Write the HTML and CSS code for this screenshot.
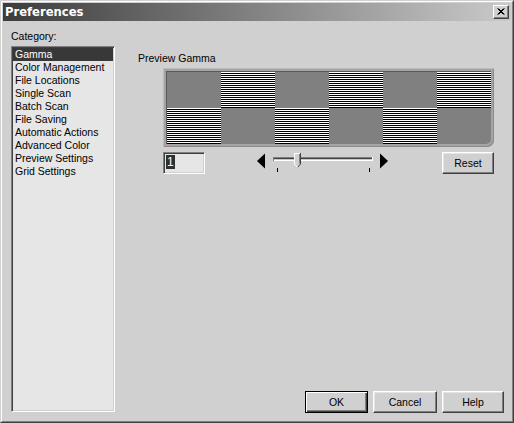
FILE: index.html
```html
<!DOCTYPE html>
<html>
<head>
<meta charset="utf-8">
<link rel="stylesheet" href="styles.css">
</head>
<body>
<div class="window">
  <div class="frame">
    <div class="titlebar">
      <span class="title">Preferences</span>
      <div class="close">
        <svg width="14" height="12" viewBox="0 0 14 12">
          <path d="M3.5,2.5 L9.5,8.5 M4.5,2.5 L10.5,8.5 M9.5,2.5 L3.5,8.5 M10.5,2.5 L4.5,8.5" stroke="#000" stroke-width="1" fill="none"/>
        </svg>
      </div>
    </div>
    <div class="content">
      <div class="left">
        <div class="label">Category:</div>
        <ul class="list">
          <li class="sel">Gamma</li>
          <li>Color Management</li>
          <li>File Locations</li>
          <li>Single Scan</li>
          <li>Batch Scan</li>
          <li>File Saving</li>
          <li>Automatic Actions</li>
          <li>Advanced Color</li>
          <li>Preview Settings</li>
          <li>Grid Settings</li>
        </ul>
      </div>
      <div class="right">
        <div class="label">Preview Gamma</div>
        <div class="preview">
          <div class="grid">
            <div class="cell gray"></div><div class="cell stripes"></div><div class="cell gray"></div><div class="cell stripes"></div><div class="cell gray"></div><div class="cell stripes"></div>
            <div class="cell stripes"></div><div class="cell gray"></div><div class="cell stripes"></div><div class="cell gray"></div><div class="cell stripes"></div><div class="cell gray corner"></div>
          </div>
        </div>
        <div class="controls">
          <div class="field"><span class="seltext">1</span></div>
          <svg class="slider" width="131" height="22" viewBox="0 0 131 22">
            <polygon points="0,9 8,1.5 8,16.5" fill="#000"/>
            <rect x="16" y="5" width="100" height="1" fill="#808080"/>
            <rect x="16" y="6" width="100" height="1" fill="#404040"/>
            <rect x="16" y="7" width="100" height="1" fill="#c8c8c8"/>
            <rect x="16" y="8" width="100" height="1" fill="#ffffff"/>
            <rect x="16" y="5" width="1" height="4" fill="#808080"/>
            <rect x="115" y="5" width="1" height="4" fill="#ffffff"/>
            <path d="M37,1 H44 V12 L40.5,15.5 L37,12 Z" fill="#d0d0d0"/>
            <polyline points="37.5,12 37.5,1.5 43,1.5" stroke="#ffffff" stroke-width="1" fill="none"/>
            <polyline points="43.5,1 43.5,12 40.5,15.5" stroke="#404040" stroke-width="1" fill="none"/>
            <polyline points="42.5,2 42.5,11.5" stroke="#808080" stroke-width="1" fill="none"/>
            <polyline points="37.5,12 40.5,15.5" stroke="#ffffff" stroke-width="1" fill="none"/>
            <rect x="20" y="16" width="1" height="4" fill="#000"/>
            <rect x="112" y="16" width="1" height="4" fill="#000"/>
            <polygon points="123,1.5 131,9 123,16.5" fill="#000"/>
          </svg>
          <div class="btn reset">Reset</div>
        </div>
        <div class="actions">
          <div class="btn default ok">OK</div>
          <div class="btn cancel">Cancel</div>
          <div class="btn help">Help</div>
        </div>
      </div>
    </div>
  </div>
</div>
</body>
</html>
```

FILE: styles.css
```css
html, body {
  margin: 0;
  padding: 0;
  background: #d0d0d0;
}

.window {
  width: 514px;
  height: 423px;
  box-sizing: border-box;
  border: 1px solid;
  border-color: #d0d0d0 #404040 #404040 #d0d0d0;
  font-family: "Liberation Sans", Arial, sans-serif;
  font-size: 10.5px;
  color: #000;
}

.frame {
  height: 100%;
  box-sizing: border-box;
  border: 1px solid;
  border-color: #ffffff #808080 #808080 #ffffff;
  padding: 1px;
  background: #d0d0d0;
  display: flex;
  flex-direction: column;
}

.titlebar {
  height: 18px;
  flex: 0 0 18px;
  display: flex;
  align-items: center;
  padding-left: 2px;
  background: linear-gradient(to right, #3c3c3c, #cacaca);
}

.title {
  font-family: "DejaVu Sans", Verdana, sans-serif;
  font-weight: bold;
  font-size: 11.6px;
  color: #ffffff;
  line-height: 18px;
}

.close {
  margin-left: auto;
  margin-right: 2px;
  width: 16px;
  height: 14px;
  box-sizing: border-box;
  background: #d0d0d0;
  border: 1px solid;
  border-color: #ffffff #404040 #404040 #ffffff;
  box-shadow: inset -1px -1px #808080;
  display: flex;
  align-items: flex-start;
  justify-content: flex-start;
}

.close svg {
  display: block;
}

.content {
  flex: 1;
  display: flex;
}

.label {
  line-height: 13px;
  height: 13px;
  white-space: nowrap;
}

.left {
  margin-left: 8px;
  padding-top: 9px;
  width: 104px;
  display: flex;
  flex-direction: column;
}

.list {
  margin: 3px 0 0 0;
  padding: 1px 0 0 0;
  list-style: none;
  width: 104px;
  height: 366px;
  box-sizing: border-box;
  background: #e6e6e6;
  border: 1px solid;
  border-color: #808080 #ffffff #ffffff #808080;
  box-shadow: inset 1px 1px #404040, inset -1px -1px #d0d0d0;
}

.list li {
  height: 13px;
  line-height: 13px;
  padding-left: 2px;
  margin: 0 1px;
  white-space: nowrap;
}

.list li.sel {
  background: #383838;
  color: #ffffff;
}

.right {
  flex: 1;
  display: flex;
  flex-direction: column;
  padding-left: 23px;
  padding-top: 31px;
  padding-right: 7px;
  padding-bottom: 7px;
}

.preview {
  margin-top: 3px;
  margin-left: 25px;
  width: 331px;
  height: 79px;
  box-sizing: border-box;
  padding: 3px;
  background: #a4a4a4;
  border-radius: 0 0 7px 0;
  box-shadow: inset 1px 1px #bcbcbc, inset -1px -1px #8c8c8c;
}

.grid {
  display: grid;
  grid-template-columns: repeat(6, 54px);
  grid-template-rows: repeat(2, 36px);
  border-top: 1px solid #5a5a5a;
  border-left: 1px solid #5a5a5a;
  border-radius: 0 0 5px 0;
  overflow: hidden;
}

.cell.gray {
  background: #808080;
}

.cell.stripes {
  background: repeating-linear-gradient(to bottom, #ffffff 0, #ffffff 1px, #000000 1px, #000000 2px);
}

.controls {
  margin-top: 5px;
  display: flex;
  align-items: flex-start;
  height: 22px;
}

.field {
  margin-left: 25px;
  width: 42px;
  height: 22px;
  box-sizing: border-box;
  background: #e6e6e6;
  border: 1px solid;
  border-color: #808080 #ffffff #ffffff #808080;
  box-shadow: inset 1px 1px #404040, inset -1px -1px #d0d0d0;
  padding: 2px 0 0 2px;
}

.seltext {
  display: inline-block;
  height: 14px;
  line-height: 14px;
  padding: 0 1px;
  background: #303030;
  color: #ffffff;
  font-size: 12px;
}

.slider {
  display: block;
  margin-left: 52px;
  flex: 0 0 auto;
}

.btn {
  height: 22px;
  box-sizing: border-box;
  background: #d0d0d0;
  border: 1px solid;
  border-color: #ffffff #404040 #404040 #ffffff;
  box-shadow: inset -1px -1px #808080, inset 1px 1px #e4e4e4;
  line-height: 20px;
  text-align: center;
  white-space: nowrap;
}

.btn.reset {
  margin-left: 54px;
  width: 52px;
}

.actions {
  margin-top: auto;
  margin-left: auto;
  display: flex;
  gap: 5px;
}

.btn.default {
  border-color: #000000;
  box-shadow: inset 1px 1px #ffffff, inset -1px -1px #404040, inset -2px -2px #808080;
}

.btn.ok {
  width: 63px;
}

.btn.cancel {
  width: 64px;
}

.btn.help {
  width: 62px;
}
```
